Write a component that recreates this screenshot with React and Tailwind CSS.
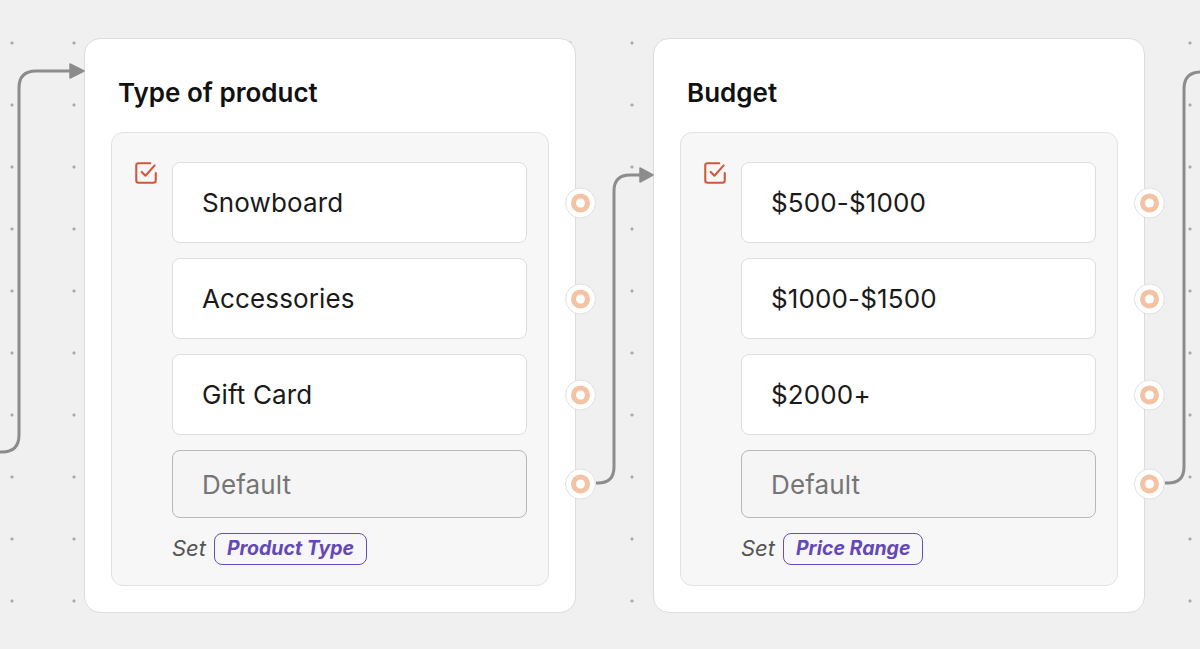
import React from "react";

const font = { fontFamily: "Inter, 'Noto Sans', sans-serif" };

function CheckIcon() {
  return (
    <svg width="26" height="26" viewBox="0 0 24 24" fill="none" stroke="#d0583a" strokeWidth="1.9" strokeLinecap="round" strokeLinejoin="round">
      <path d="M21 12v7a2 2 0 0 1-2 2H5a2 2 0 0 1-2-2V5a2 2 0 0 1 2-2h11" />
      <path d="M8 11l3.5 3.5L20 5" />
    </svg>
  );
}

function Handle() {
  return (
    <div className="absolute left-[calc(100%+39px)] top-1/2 -translate-y-1/2 w-[31px] h-[31px] rounded-full bg-white border border-[#e0e0e0] flex items-center justify-center">
      <div className="w-[19px] h-[19px] rounded-full bg-[#f4c3a4] flex items-center justify-center">
        <div className="w-[9px] h-[9px] rounded-full bg-white" />
      </div>
    </div>
  );
}

function Option({ label, isDefault }) {
  return (
    <div
      className={
        "relative w-[355px] rounded-[8px] border flex items-center pl-[29px] text-[26px] tracking-[0.005em] " +
        (isDefault
          ? "h-[68px] border-[#b8b8b8] bg-[#f5f5f5] text-[#757575]"
          : "h-[81px] border-[#dedede] bg-white text-[#1a1a1a]")
      }
    >
      {label}
      <Handle />
    </div>
  );
}

function Card({ title, options, tag }) {
  return (
    <div className="w-[492px] h-[575px] rounded-[16px] border border-[#dcdcdc] bg-white px-[26px] pt-[37px] pb-[26px] flex flex-col shrink-0">
      <div className="pl-[7px] h-[34px] leading-[34px] text-[26px] font-semibold text-[#111] mb-[22px]">{title}</div>
      <div className="flex-1 rounded-[12px] border border-[#e2e2e2] bg-[#f7f7f7] pt-[29px] pl-[21px] flex">
        <div className="w-[39px] -mt-[2px] shrink-0">
          <CheckIcon />
        </div>
        <div className="flex flex-col gap-[15px]">
          {options.map((o) => (
            <Option key={o} label={o} />
          ))}
          <Option label="Default" isDefault />
          <div className="flex items-center gap-[8px] -mt-[1px]">
            <span className="italic text-[22px] text-[#555]">Set</span>
            <span className="h-[32px] px-[12px] rounded-[8px] border-[1.5px] border-[#6a4cbf] text-[#6548b8] italic font-bold text-[19.5px] flex items-center">
              {tag}
            </span>
          </div>
        </div>
      </div>
    </div>
  );
}

export default function App() {
  return (
    <div
      style={font}
      className="relative w-[1200px] h-[649px] overflow-hidden bg-[#f0f0f0] bg-[radial-gradient(circle,#a9a9a9_1.3px,transparent_1.8px)] bg-[length:62px_62px] bg-[position:-19px_12px]"
    >
      <div className="flex gap-[77px] pl-[84px] pt-[38px]">
        <Card title="Type of product" options={["Snowboard", "Accessories", "Gift Card"]} tag="Product Type" />
        <Card title="Budget" options={["$500-$1000", "$1000-$1500", "$2000+"]} tag="Price Range" />
      </div>
      <svg className="absolute inset-0 pointer-events-none" width="1200" height="649" viewBox="0 0 1200 649" fill="none">
        <g stroke="#8c8c8c" strokeWidth="3" fill="none">
          <path d="M-10 452 H2 Q19 452 19 435 V88 Q19 71 36 71 H72" />
          <path d="M596 483 H598 Q614 483 614 467 V191 Q614 175 630 175 H642" />
          <path d="M1165 483 H1168 Q1184 483 1184 467 V89 Q1184 72 1201 72 H1210" />
        </g>
        <path d="M70 64 L84 71 L70 78 Z" fill="#8c8c8c" stroke="#8c8c8c" strokeWidth="1.5" strokeLinejoin="round" />
        <path d="M640 168 L653 175 L640 182 Z" fill="#8c8c8c" stroke="#8c8c8c" strokeWidth="1.5" strokeLinejoin="round" />
      </svg>
    </div>
  );
}
